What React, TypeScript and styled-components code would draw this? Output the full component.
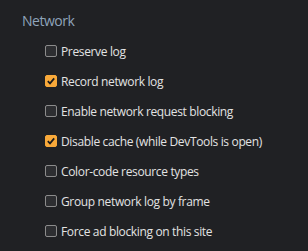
import React from "react";
import styled, { createGlobalStyle } from "styled-components";

const Global = createGlobalStyle`
  html, body { margin: 0; padding: 0; background: #202124; }
  body { font-family: "Open Sans", "Noto Sans", sans-serif; }
`;

const Panel = styled.div`
  width: 308px;
  height: 251px;
  box-sizing: border-box;
  background: #202124;
  padding: 11px 0 0 22px;
  display: flex;
  flex-direction: column;
`;

const Heading = styled.h2`
  margin: 0;
  font-size: 14px;
  font-weight: 400;
  line-height: 20px;
  letter-spacing: -0.5px;
  color: #8fa4ba;
`;

const List = styled.div`
  display: flex;
  flex-direction: column;
  padding: 5px 0 0 23px;
`;

const Row = styled.label`
  display: flex;
  align-items: center;
  height: 30px;
  gap: 4px;
  font-size: 12px;
  letter-spacing: -0.35px;
  color: #e3e3e3;
`;

const Box = styled.span<{ $checked: boolean }>`
  width: 12px;
  height: 12px;
  box-sizing: border-box;
  border-radius: 2px;
  border: 1px solid ${(p) => (p.$checked ? "#f8a93a" : "#8c8c8c")};
  background: ${(p) => (p.$checked ? "#f8a93a" : "#2d2e31")};
  display: flex;
  align-items: center;
  justify-content: center;
  flex: none;
`;

const items: [string, boolean][] = [
  ["Preserve log", false],
  ["Record network log", true],
  ["Enable network request blocking", false],
  ["Disable cache (while DevTools is open)", true],
  ["Color-code resource types", false],
  ["Group network log by frame", false],
  ["Force ad blocking on this site", false],
];

export default function App() {
  return (
    <>
      <Global />
      <Panel>
        <Heading>Network</Heading>
        <List>
          {items.map(([t, c]) => (
            <Row key={t}>
              <Box $checked={c}>
                {c && (
                  <svg width="10" height="10" viewBox="0 0 10 10">
                    <path d="M1.8 5.2 L4 7.4 L8.2 2.4" fill="none" stroke="#1b1b1b" strokeWidth="1.7" />
                  </svg>
                )}
              </Box>
              {t}
            </Row>
          ))}
        </List>
      </Panel>
    </>
  );
}
